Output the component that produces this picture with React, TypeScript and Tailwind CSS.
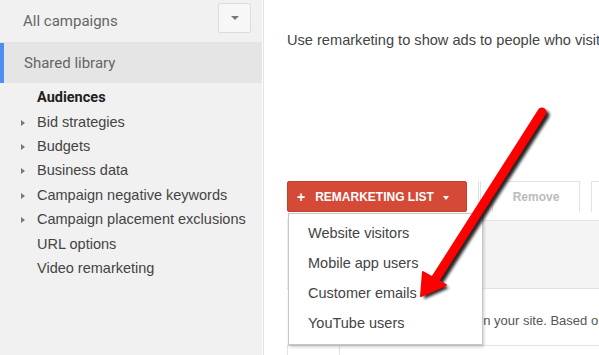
import { ReactNode } from "react";

const navItems = [
  { label: "Bid strategies", arrow: true },
  { label: "Budgets", arrow: true },
  { label: "Business data", arrow: true },
  { label: "Campaign negative keywords", arrow: true },
  { label: "Campaign placement exclusions", arrow: true },
  { label: "URL options", arrow: false },
  { label: "Video remarketing", arrow: false },
];

const menuItems = ["Website visitors", "Mobile app users", "Customer emails", "YouTube users"];

function NavRow({ children, arrow }: { children: ReactNode; arrow?: boolean }) {
  return (
    <div className="flex h-[24.4px] items-center">
      <div className="flex w-[37px] justify-center pl-[9px]">
        {arrow && (
          <span className="h-0 w-0 border-y-[3.5px] border-l-[4px] border-y-transparent border-l-[#777]" />
        )}
      </div>
      {children}
    </div>
  );
}

function Sidebar() {
  return (
    <div className="flex h-full w-[262px] shrink-0 flex-col bg-[#f1f1f1]">
      {/* Header */}
      <div className="flex h-[43px] items-center justify-between border-b border-[#e4e4e4] pl-[23px] pr-[11px]">
        <span className="font-['Roboto',sans-serif] text-[15px] text-[#666]">All campaigns</span>
        <div className="-mt-[6px] flex h-[30px] w-[33px] items-center justify-center rounded-[2px] border border-[#dcdcdc] bg-[#f7f7f7]">
          <span className="h-0 w-0 border-x-[4px] border-t-[4px] border-x-transparent border-t-[#777]" />
        </div>
      </div>

      {/* Shared library */}
      <div className="flex h-[40px] items-center border-l-4 border-[#4d8ef0] bg-[#e5e5e5] pl-[20px]">
        <span className="font-['Roboto',sans-serif] text-[15px] text-[#666]">Shared library</span>
      </div>

      <div className="flex flex-col pt-[3px] font-['Liberation_Sans',Arial,sans-serif] text-[14.5px] text-[#444]">
        <NavRow>
          <span className="font-['Roboto',sans-serif] font-bold text-[#222]">Audiences</span>
        </NavRow>
        {navItems.map((item) => (
          <NavRow key={item.label} arrow={item.arrow}>
            <span>{item.label}</span>
          </NavRow>
        ))}
      </div>
    </div>
  );
}

function Arrow() {
  return (
    <svg className="pointer-events-none absolute left-0 top-0 z-20" width="599" height="355">
      <defs>
        <filter id="sh" x="-20%" y="-20%" width="140%" height="140%">
          <feGaussianBlur stdDeviation="1.5" />
        </filter>
      </defs>
      <g transform="translate(3 3)" filter="url(#sh)" opacity="0.85">
        <line x1="542" y1="112" x2="436" y2="278" stroke="#000" strokeWidth="9" strokeLinecap="round" />
        <polygon points="421,296 423,272 446,285" fill="#000" />
      </g>
      <line x1="542" y1="112" x2="436" y2="278" stroke="#ff0000" strokeWidth="9" strokeLinecap="round" />
      <polygon points="421,296 423,272 446,285" fill="#ff0000" stroke="#ff0000" strokeWidth="2" strokeLinejoin="round" />
    </svg>
  );
}

export default function App() {
  return (
    <div className="relative flex h-[355px] w-[599px] overflow-hidden bg-white font-['Liberation_Sans',Arial,sans-serif]">
      <Sidebar />

      <div className="ml-px flex h-full min-w-0 flex-1 flex-col border-l border-[#e3e3e3] pl-[23px]">
        <p className="mt-[30px] whitespace-nowrap text-[14.6px] leading-[20px] text-[#444]">
          Use remarketing to show ads to people who visit your site.
        </p>

        {/* Toolbar */}
        <div className="relative mt-[131px] flex h-[39px] items-start whitespace-nowrap">
          <div className="flex h-[31px] w-[180px] shrink-0 items-center rounded-[2px] border border-[#c1402f] bg-[#d44a37] pl-[9px] text-[12px] font-bold text-white">
            <span className="text-[14px] leading-none">+</span>
            <span className="ml-[10px]">REMARKETING LIST</span>
            <span className="ml-[9px] mt-[2px] h-0 w-0 border-x-[3.5px] border-t-[4px] border-x-transparent border-t-white" />
          </div>
          <div className="ml-[11px] h-[39px] w-[3px] shrink-0 border-x border-[#e0e0e0]" />
          <div className="ml-[11px] flex h-[31px] w-[88px] shrink-0 items-center justify-center border-x border-t border-[#e2e2e2] text-[12px] font-bold text-[#bbb]">
            Remove
          </div>
          <div className="ml-[11px] h-[31px] w-[40px] shrink-0 border-l border-t border-[#e2e2e2]" />

          {/* Dropdown menu */}
          <div className="absolute left-px top-[32px] z-10 flex w-[195px] flex-col border border-[#c6c6c6] bg-white py-[5px] text-[14.5px] text-[#444] shadow-[1px_2px_3px_rgba(0,0,0,0.2)]">
            {menuItems.map((item) => (
              <div key={item} className="flex h-[30px] items-center pl-[19px]">
                {item}
              </div>
            ))}
          </div>
        </div>

        <div className="h-[69px] border-y border-[#e3e3e3] bg-[#f4f4f4]" />

        <div className="flex h-[56px] items-center overflow-hidden pl-[189px] pt-[8px] whitespace-nowrap text-[13px] text-[#555]">
          on your site. Based on your settings, visitors are added.
        </div>

        <div className="flex flex-1 border-t border-[#e3e3e3]">
          <div className="w-[53px] border-x border-[#e3e3e3]" />
        </div>
      </div>

      <Arrow />
    </div>
  );
}
